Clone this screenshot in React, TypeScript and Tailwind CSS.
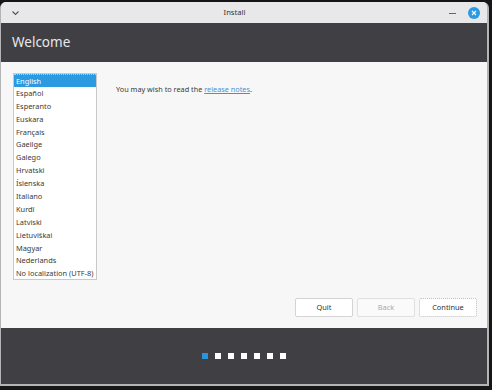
import React from "react";

const langs = [
  "English",
  "Español",
  "Esperanto",
  "Euskara",
  "Français",
  "Gaeilge",
  "Galego",
  "Hrvatski",
  "Íslenska",
  "Italiano",
  "Kurdî",
  "Latviski",
  "Lietuviškai",
  "Magyar",
  "Nederlands",
  "No localization (UTF-8)",
];

export default function App() {
  return (
    <div
      className="w-[492px] h-[390px] bg-[#161616] pt-[2px] overflow-hidden"
      style={{ fontFamily: '"Noto Sans", "DejaVu Sans", sans-serif' }}
    >
      <div className="w-[489px] h-[384px] flex flex-col rounded-t-[6px] overflow-hidden border-l border-r-2 border-b-2 border-[#b4b4b4] bg-[#f7f7f7]">
        {/* title bar */}
        <div className="h-[21px] shrink-0 bg-[#e8e8ea] flex items-center px-[9px] relative">
          <svg width="9" height="6" viewBox="0 0 9 6" className="ml-[1px]">
            <path d="M1.5 1.5 L4.5 4.5 L7.5 1.5" stroke="#555" strokeWidth="1.1" fill="none" />
          </svg>
          <div className="flex-1 text-center text-[7.6px] text-[#333] leading-none mt-[1px]">Install</div>
          <div className="w-[7px] h-[1px] bg-[#666] mr-[12px] mt-[2px]" />
          <div className="w-[12px] h-[12px] rounded-full bg-[#2a9be2] flex items-center justify-center mr-[-2px]">
            <svg width="6" height="6" viewBox="0 0 6 6">
              <path d="M1 1 L5 5 M5 1 L1 5" stroke="white" strokeWidth="1.1" />
            </svg>
          </div>
        </div>
        {/* header */}
        <div className="h-[39px] shrink-0 bg-[#403f44] flex items-center pl-[11px]">
          <span className="text-[13.5px] text-[#e8e8e8] leading-none">Welcome</span>
        </div>
        {/* content */}
        <div className="flex-1 bg-[#f7f7f7] flex flex-col pl-[12px] pr-[10px] pt-[11px] pb-[11px]">
          <div className="flex flex-1">
            <div className="w-[84px] h-[207px] bg-white border border-[#c9c9c9] flex flex-col">
              {langs.map((l, i) => (
                <div
                  key={l}
                  className={
                    i === 0
                      ? "h-[12.9px] leading-[12.9px] text-[7.4px] pl-[2px] bg-[#2b9ae0] text-white whitespace-nowrap border-t border-dotted border-[#a8d4f3]"
                      : "h-[12.9px] leading-[12.9px] text-[7.4px] pl-[2px] text-[#3a3a3a] whitespace-nowrap"
                  }
                >
                  {l}
                </div>
              ))}
            </div>
            <div className="pl-[19px] pt-[13px] text-[7.3px] text-[#3a3a3a] leading-none">
              You may wish to read the{" "}
              <span className="text-[#4a8fd8] underline">release notes</span>.
            </div>
          </div>
          <div className="flex justify-end gap-[4px]">
            <button className="w-[58px] h-[19px] bg-white border border-[#d4d4d4] rounded-[2px] text-[7.4px] text-[#333]">
              Quit
            </button>
            <button className="w-[58px] h-[19px] bg-[#fafafa] border border-[#e0e0e0] rounded-[2px] text-[7.4px] text-[#aaa]">
              Back
            </button>
            <button className="w-[58px] h-[19px] bg-white border border-dotted border-[#bdbdbd] rounded-[2px] text-[7.4px] text-[#333]">
              Continue
            </button>
          </div>
        </div>
        {/* bottom bar */}
        <div className="h-[56px] shrink-0 bg-[#403f44] flex items-center justify-center gap-[7px]">
          <div className="w-[6px] h-[6px] bg-[#2a95dc]" />
          <div className="w-[6px] h-[6px] bg-white" />
          <div className="w-[6px] h-[6px] bg-white" />
          <div className="w-[6px] h-[6px] bg-white" />
          <div className="w-[6px] h-[6px] bg-white" />
          <div className="w-[6px] h-[6px] bg-white" />
          <div className="w-[6px] h-[6px] bg-white" />
        </div>
      </div>
    </div>
  );
}
